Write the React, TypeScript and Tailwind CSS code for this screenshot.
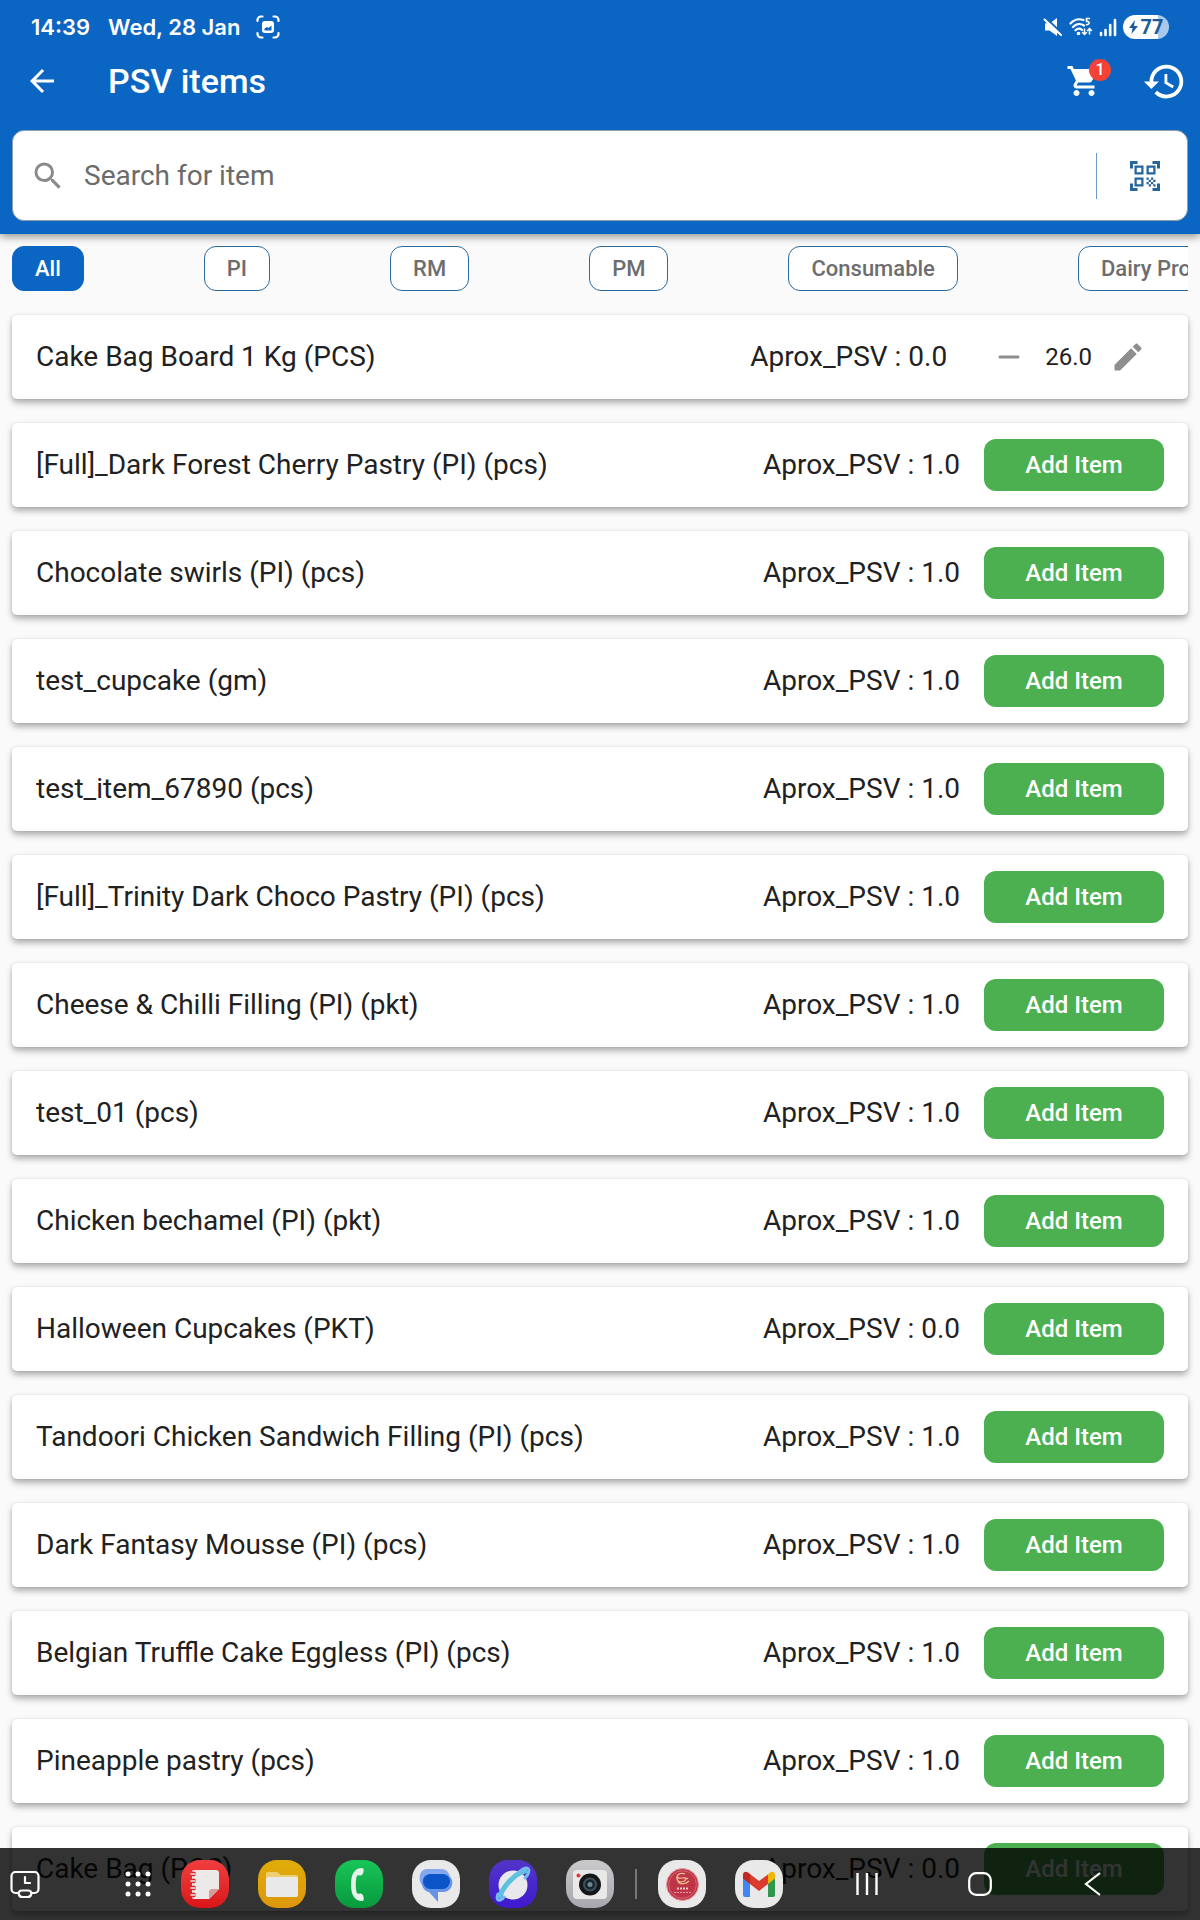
import type { ReactNode } from 'react';
import { MdArrowBack, MdHistory, MdQrCodeScanner, MdSearch, MdShoppingCart } from 'react-icons/md';

interface Item {
  name: string;
  psv: string;
  qty?: string;
}

const categories = ['All', 'PI', 'RM', 'PM', 'Consumable', 'Dairy Products'];

const items: Item[] = [
  { name: 'Cake Bag Board 1 Kg (PCS)', psv: '0.0', qty: '26.0' },
  { name: '[Full]_Dark Forest Cherry Pastry (PI) (pcs)', psv: '1.0' },
  { name: 'Chocolate swirls (PI) (pcs)', psv: '1.0' },
  { name: 'test_cupcake (gm)', psv: '1.0' },
  { name: 'test_item_67890 (pcs)', psv: '1.0' },
  { name: '[Full]_Trinity Dark Choco Pastry (PI) (pcs)', psv: '1.0' },
  { name: 'Cheese & Chilli Filling (PI) (pkt)', psv: '1.0' },
  { name: 'test_01 (pcs)', psv: '1.0' },
  { name: 'Chicken bechamel (PI) (pkt)', psv: '1.0' },
  { name: 'Halloween Cupcakes (PKT)', psv: '0.0' },
  { name: 'Tandoori Chicken Sandwich Filling (PI) (pcs)', psv: '1.0' },
  { name: 'Dark Fantasy Mousse (PI) (pcs)', psv: '1.0' },
  { name: 'Belgian Truffle Cake Eggless (PI) (pcs)', psv: '1.0' },
  { name: 'Pineapple pastry (pcs)', psv: '1.0' },
  { name: 'Cake Bag (PCS)', psv: '0.0' },
];

const StatusBar = () => (
  <div className="flex h-[54px] items-center pr-[31px] pl-[31px] font-['Inter',sans-serif] text-[22px] font-semibold">
    <span>14:39</span>
    <span className="ml-[18px]">Wed, 28 Jan</span>
    <svg className="ml-4 size-6" viewBox="0 0 24 24" fill="none" stroke="currentColor" strokeWidth="2.2" strokeLinecap="round">
      <path d="M1.5 6V5A3.5 3.5 0 0 1 5 1.500h1.500M17.500 1.500H19A3.500 3.500 0 0 1 22.500 5v1M22.500 18v1a3.500 3.500 0 0 1-3.500 3.500h-1.500M6.500 22.500H5A3.500 3.500 0 0 1 1.500 19v-1" />
      <rect x="6" y="6" width="12" height="12" rx="3" fill="currentColor" stroke="none" />
      <path d="M8.500 15.500v-2l2.500-1.500 1.500 1 3-2.500v5z" fill="#0b66c3" stroke="none" />
    </svg>
    <div className="ml-auto flex items-center gap-[6px]">
      <svg className="h-5 w-5" viewBox="0 0 20 20" fill="currentColor">
        <path d="M2 6.500h4.500L14 1v13.500z" />
        <path d="M2 6.500v7h4.500l7.500 5.500V6.500z" />
        <path d="M3 1l16 15.500" stroke="#0b66c3" strokeWidth="2" />
        <path d="M1.500 2.500l16.500 15.500" stroke="currentColor" strokeWidth="2" strokeLinecap="round" />
      </svg>
      <svg className="h-5 w-6" viewBox="0 0 24 20" fill="none" stroke="currentColor" strokeWidth="2.200" strokeLinecap="round">
        <path d="M1.500 6.500C5 2.500 10 1.500 14.500 3M4 10c3-3.300 7.500-3.800 11-1.500M6.500 13.300c1.800-1.800 4.500-2 6.500-.5" />
        <path d="M20.500 1.500h-3v3c3-.8 4 3 0 3.200" strokeWidth="1.600" />
        <path d="M15.500 12v5.500m-2-2 2 2 2-2M20.500 17v-5.500m-2 2 2-2 2 2" strokeWidth="1.500" />
        <circle cx="9.500" cy="16.500" r="1.800" fill="currentColor" stroke="none" />
      </svg>
      <svg className="h-5 w-[18px]" viewBox="0 0 18 20" stroke="currentColor" strokeWidth="2.600" strokeLinecap="round">
        <path d="M2 18v-2M6.500 18v-5M11.200 18V8M16 18V3" />
      </svg>
      <div className="flex h-6 w-[46px] items-center justify-center gap-[3px] rounded-full bg-linear-to-r from-white from-76% to-[#a9c8ec] to-76% font-['Roboto',sans-serif] text-xl font-bold text-[#1c5b98]">
        <svg className="h-4 w-[9px]" viewBox="0 0 9 16" fill="currentColor">
          <path d="M6 1 0 9h3.500L2.500 15 9 7H5z" />
        </svg>
        <span>77</span>
      </div>
    </div>
  </div>
);

const Header = () => (
  <header className="relative z-10 bg-[#0b66c3] pb-[13px] text-white shadow-[0_3px_8px_rgba(0,0,0,0.4)]">
    <StatusBar />
    <div className="flex h-[54px] items-center pr-[13px] pl-6">
      <button aria-label="Back">
        <MdArrowBack className="size-9" />
      </button>
      <h1 className="ml-12 text-[34px] font-medium">PSV items</h1>
      <button aria-label="Cart" className="relative ml-auto">
        <MdShoppingCart className="size-9" />
        <span className="absolute -top-1 -right-[9px] flex size-[22px] items-center justify-center rounded-full bg-[#f44336] text-base font-medium">
          1
        </span>
      </button>
      <button aria-label="History" className="ml-10">
        <MdHistory className="size-[45px]" />
      </button>
    </div>
    <div className="mx-3 mt-[22px] flex h-[91px] items-center rounded-xl border border-[#8f9dad] bg-white pr-6 pl-[17px]">
      <MdSearch className="size-9 text-[#8a8a8a]" />
      <input
        aria-label="Search for item"
        placeholder="Search for item"
        className="ml-[18px] min-w-0 flex-1 text-[28px] text-black outline-none placeholder:text-[#6b6b6b]"
      />
      <div className="h-[46px] w-px bg-[#6f98c4]" />
      <button aria-label="Scan code" className="ml-[30px]">
        <MdQrCodeScanner className="size-9 text-[#25659c]" />
      </button>
    </div>
  </header>
);

const CategoryChips = () => (
  <nav className="mx-3 flex gap-[120px] overflow-hidden pt-3">
    {categories.map((category, i) => (
      <button
        key={category}
        className={`h-[45px] shrink-0 rounded-xl border-[1.5px] px-[22px] text-[22px] font-medium ${
          i === 0 ? 'border-[#0b66c3] bg-[#0b66c3] text-white' : 'border-[#2b6a9e] bg-white text-[#6d6d70]'
        }`}
      >
        {category}
      </button>
    ))}
  </nav>
);

const ItemCard = ({ name, psv, qty }: Item) => (
  <li className="flex h-[84px] items-center rounded-[5px] bg-white px-6 text-[28px] text-[#212121] shadow-[0_4px_6px_rgba(0,0,0,0.3),0_0_3px_rgba(0,0,0,0.1)]">
    <span className="flex-1 truncate">{name}</span>
    <span>Aprox_PSV : {psv}</span>
    {qty ? (
      <div className="mr-[18px] ml-11 flex items-center gap-[18px]">
        <button aria-label="Decrease">
          <svg className="size-9 text-[#8e8e8e]" viewBox="0 0 24 24" fill="currentColor">
            <path d="M18 13H6c-.55 0-1-.45-1-1s.45-1 1-1h12c.55 0 1 .45 1 1s-.45 1-1 1z" />
          </svg>
        </button>
        <span className="text-2xl">{qty}</span>
        <button aria-label="Edit quantity">
          <svg className="size-9 text-[#8e8e8e]" viewBox="0 0 24 24" fill="currentColor">
            <path d="M3 17.46v3.04c0 .28.22.5.5.5h3.04c.13 0 .26-.05.35-.15L17.81 9.940l-3.750-3.750L3.150 17.100c-.1.1-.15.22-.15.36zM20.710 7.040c.39-.39.39-1.020 0-1.410l-2.340-2.340c-.39-.39-1.020-.39-1.410 0l-1.830 1.830 3.750 3.750 1.830-1.830z" />
          </svg>
        </button>
      </div>
    ) : (
      <button className="ml-6 h-[52px] w-[180px] rounded-xl bg-[#4caf50] text-2xl font-medium text-white">Add Item</button>
    )}
  </li>
);

interface AppIconProps {
  label: string;
  className: string;
  children: ReactNode;
}

const AppIcon = ({ label, className, children }: AppIconProps) => (
  <button aria-label={label} className={`size-12 overflow-hidden rounded-[19px] ${className}`}>
    <svg className="size-12" viewBox="0 0 48 48" fill="none">
      {children}
    </svg>
  </button>
);

const Taskbar = () => (
  <footer className="fixed inset-x-0 bottom-0 z-20 flex h-[72px] items-center bg-black/80 pr-[95px] pl-[10px] text-white">
    <button aria-label="Recent app">
      <svg className="size-[30px]" viewBox="0 0 30 30" fill="none" stroke="currentColor" strokeWidth="2.200" strokeLinecap="round" strokeLinejoin="round">
        <path d="M8 24H5.500A4 4 0 0 1 1.500 20V7a4 4 0 0 1 4-4h19a4 4 0 0 1 4 4v13a4 4 0 0 1-4 4H22M15 8v6h5" />
        <path d="M12 21.500h6c5 0 4 6.500-.5 6.500h-5C8 28 7 21.500 12 21.500z" />
      </svg>
    </button>
    <button aria-label="All apps" className="ml-[85px]">
      <svg className="size-[26px]" viewBox="0 0 26 26" fill="currentColor">
        {[3, 13, 23].map((y) => [3, 13, 23].map((x) => <circle key={`${x}-${y}`} cx={x} cy={y} r="2.500" />))}
      </svg>
    </button>
    <div className="ml-[30px] flex items-center gap-[29px]">
      <AppIcon label="Notes" className="bg-linear-to-b from-[#f03d3f] to-[#d91417]">
        <path d="M13 10h22a3 3 0 0 1 3 3v16L28 39H13a2 2 0 0 1-2-2V12a2 2 0 0 1 2-2z" fill="#ece9e9" />
        <path d="M28 39v-7a3 3 0 0 1 3-3h7z" fill="#d79a9a" />
        {[14, 21, 28, 35].map((y) => (
          <g key={y}>
            <circle cx="12.500" cy={y} r="2.400" fill="#df2225" />
            <path d={`M10 ${y}h4`} stroke="#ece9e9" strokeWidth="1.500" strokeLinecap="round" />
          </g>
        ))}
      </AppIcon>
      <AppIcon label="My Files" className="bg-linear-to-b from-[#e0ac08] to-[#dc970c]">
        <path d="M8 14a2 2 0 0 1 2-2h9l4 3h15a2 2 0 0 1 2 2v5H8z" fill="#efcf73" />
        <rect x="8" y="17" width="32" height="20" rx="2" fill="#e9e9e9" />
      </AppIcon>
      <AppIcon label="Phone" className="bg-linear-to-b from-[#18c558] to-[#08993d]">
        <path d="M27 8c-8 0-11 7-11 16.500S19 41 27 41c2 0 2-2 1.500-4-.5-3-2-4-4-3.500-2 .5-2.500 0-3-1.500-1-4-1-11 0-15 .5-1.500 1-2 3-1.500 2 .5 3.500-1 4-3.500.5-2 0-4-1.500-4z" fill="#e5f4e9" />
      </AppIcon>
      <AppIcon label="Messages" className="bg-[#e9e9ea]">
        <path d="M15 9h14c6 0 10 5 8 10l-8 8H15C5 27 5 9 15 9z" fill="#83a8ed" />
        <path d="M18 14h13c13 0 12 18 0 18h-5v10l-9-10C7 30 8 14 18 14z" fill="#6695e8" />
        <rect x="11" y="14" width="27" height="15" rx="7.500" fill="#0b55c9" />
      </AppIcon>
      <AppIcon label="Internet" className="bg-linear-to-b from-[#5134c7] to-[#4017d0]">
        <circle cx="24" cy="25" r="14.500" fill="#e8e8ed" />
        <path d="M11 36C15 25 27 13 36 11" stroke="#5cc2de" strokeWidth="5" strokeLinecap="round" />
        <path d="M9 34c-3 7 2 8 6 3M30 12c7-6 12-5 9 2-1 2-2 3-3 4" stroke="#75baf0" strokeWidth="3" strokeLinecap="round" />
      </AppIcon>
      <AppIcon label="Camera" className="bg-linear-to-b from-[#cacacd] to-[#a7a7ac]">
        <rect x="7" y="10" width="34" height="29" rx="4" fill="#e9e9ea" />
        <circle cx="12.500" cy="15.500" r="2" fill="#e1393a" />
        <circle cx="24" cy="24.500" r="11" fill="#151719" />
        <circle cx="24" cy="24.500" r="6" fill="#18272f" stroke="#405059" strokeWidth="2" />
        <circle cx="24" cy="24.500" r="2.500" fill="#6f8792" />
      </AppIcon>
    </div>
    <div className="ml-[21px] h-[30px] w-[2px] bg-[#777]" />
    <div className="ml-[21px] flex items-center gap-[29px]">
      <AppIcon label="Cake shop" className="bg-[#e9e9e9]">
        <circle cx="24.500" cy="24.500" r="16" fill="#be3547" stroke="#e29ca5" />
        <circle cx="24.500" cy="24.500" r="13.800" stroke="#d7737f" strokeWidth=".8" />
        <path d="M27 14c-5-2-9 1-8 5s7 4 9 0M19 17c3 3 6-1 11 2M20 22c3 3 8 2 11-1" stroke="#ecc08f" strokeWidth="1.200" />
        <path d="M19 28.500h11" stroke="#eec6c6" strokeWidth="2" strokeDasharray="2 1" />
        <path d="M16 32.500h17" stroke="#e1a3a9" strokeWidth="1.200" strokeDasharray="2 1" />
      </AppIcon>
      <AppIcon label="Gmail" className="bg-[#e9e9e9]">
        <path d="M8 16v19a2 2 0 0 0 2 2h5V19z" fill="#4285f4" />
        <path d="M33 19v18h5a2 2 0 0 0 2-2V16z" fill="#31964e" />
        <path d="M33 14.500v9.500l7-5.500V15c0-3.500-3-4-5-2.500z" fill="#f0b506" />
        <path d="M13 12.500l11 8.500 9-6.500V24l-9 7-9-7z" fill="#d93b31" />
        <path d="M8 15v3.500l7 5.500v-9.500l-2-2C11 11 8 11.500 8 15z" fill="#bd2823" />
      </AppIcon>
    </div>
    <div className="ml-auto flex items-center gap-[89px]">
      <button aria-label="Recents">
        <svg className="size-6" viewBox="0 0 24 24" stroke="currentColor" strokeWidth="2.400">
          <path d="M2.500 1v22M12 1v22M21.500 1v22" />
        </svg>
      </button>
      <button aria-label="Home">
        <svg className="size-6" viewBox="0 0 24 24" fill="none" stroke="currentColor" strokeWidth="2.200">
          <rect x="1.200" y="1.200" width="21.600" height="21.600" rx="7" />
        </svg>
      </button>
      <button aria-label="Navigate back">
        <svg className="size-6" viewBox="0 0 24 24" fill="none" stroke="currentColor" strokeWidth="2.200">
          <path d="M19 1 5 12l14 11" />
        </svg>
      </button>
    </div>
  </footer>
);

const App = () => (
  <div className="min-h-screen bg-[#fafafa] font-['Roboto',sans-serif]">
    <Header />
    <main>
      <CategoryChips />
      <ul className="flex flex-col gap-6 px-3 pt-6 pb-2">
        {items.map((item) => (
          <ItemCard key={item.name} {...item} />
        ))}
      </ul>
    </main>
    <Taskbar />
  </div>
);

export default App;
